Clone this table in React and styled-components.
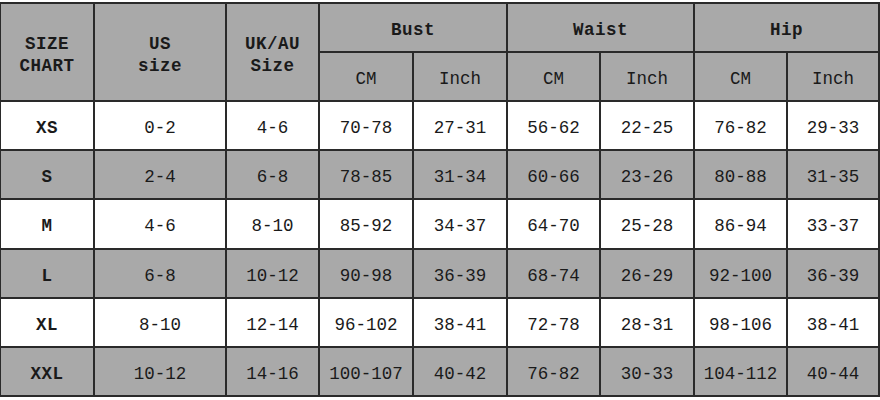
import styled, { createGlobalStyle } from "styled-components";

const GlobalStyle = createGlobalStyle`
  html, body {
    margin: 0;
    padding: 0;
    background: #ffffff;
    width: 880px;
    height: 400px;
    overflow: hidden;
  }
`;

const Chart = styled.div`
  display: grid;
  grid-template-columns: 92px 130px 91px 92px 92px 91px 92px 91px 90px;
  grid-template-rows: 47px 47px repeat(6, 47.2px);
  gap: 2px;
  padding: 2px;
  margin: 2px 0 0 -1px;
  width: max-content;
  background: #2a2a2a;
  font-family: "Liberation Mono", "DejaVu Sans Mono", monospace;
  color: #1a1a1a;
`;

const Cell = styled.div`
  display: flex;
  align-items: center;
  justify-content: center;
  text-align: center;
  padding-top: 5px;
  box-sizing: border-box;
  background: ${(p) => (p.$shade ? "#a9a9a9" : "#ffffff")};
  font-size: 17.5px;
  font-weight: ${(p) => (p.$bold ? 700 : 400)};
  line-height: 22px;
  letter-spacing: ${(p) => (p.$bold ? "0.5px" : "0")};
  grid-row: ${(p) => p.$rows || "auto"};
  grid-column: ${(p) => p.$cols || "auto"};
`;

const Lines = styled.span`
  display: block;
  white-space: pre-line;
`;

const rows = [
  ["XS", "0-2", "4-6", "70-78", "27-31", "56-62", "22-25", "76-82", "29-33"],
  ["S", "2-4", "6-8", "78-85", "31-34", "60-66", "23-26", "80-88", "31-35"],
  ["M", "4-6", "8-10", "85-92", "34-37", "64-70", "25-28", "86-94", "33-37"],
  ["L", "6-8", "10-12", "90-98", "36-39", "68-74", "26-29", "92-100", "36-39"],
  ["XL", "8-10", "12-14", "96-102", "38-41", "72-78", "28-31", "98-106", "38-41"],
  ["XXL", "10-12", "14-16", "100-107", "40-42", "76-82", "30-33", "104-112", "40-44"],
];

export default function App() {
  return (
    <>
      <GlobalStyle />
      <Chart>
        <Cell $shade $bold $rows="1 / span 2">
          <Lines>{"SIZE\nCHART"}</Lines>
        </Cell>
        <Cell $shade $bold $rows="1 / span 2">
          <Lines>{"US\nsize"}</Lines>
        </Cell>
        <Cell $shade $bold $rows="1 / span 2">
          <Lines>{"UK/AU\nSize"}</Lines>
        </Cell>
        <Cell $shade $bold $cols="span 2">Bust</Cell>
        <Cell $shade $bold $cols="span 2">Waist</Cell>
        <Cell $shade $bold $cols="span 2">Hip</Cell>
        {["CM", "Inch", "CM", "Inch", "CM", "Inch"].map((u, i) => (
          <Cell $shade key={"u" + i}>
            {u}
          </Cell>
        ))}
        {rows.map((row, r) =>
          row.map((v, c) => (
            <Cell key={r + "-" + c} $shade={r % 2 === 1} $bold={c === 0}>
              {v}
            </Cell>
          ))
        )}
      </Chart>
    </>
  );
}
